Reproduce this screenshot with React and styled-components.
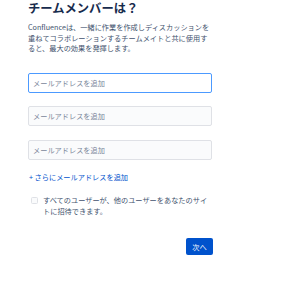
import styled, { createGlobalStyle } from "styled-components";

const GlobalStyle = createGlobalStyle`
  body {
    margin: 0;
    background: #ffffff;
    font-family: "Noto Sans CJK JP", "Noto Sans", sans-serif;
  }
`;

const Wrapper = styled.main`
  width: 184px;
  margin-left: 28px;
  display: flex;
  flex-direction: column;
`;

const Title = styled.h1`
  margin: 0;
  font-size: 12.3px;
  line-height: 16px;
  font-weight: 700;
  color: #172b4d;
`;

const Lead = styled.p`
  margin: 6px 0 0;
  font-size: 7.2px;
  line-height: 10.5px;
  color: #42526e;
`;

const Fields = styled.div`
  margin-top: 19px;
  display: flex;
  flex-direction: column;
  gap: 13.5px;
`;

const Input = styled.input`
  box-sizing: border-box;
  width: 100%;
  height: 20px;
  padding: 0 4px;
  font-family: inherit;
  font-size: 7.2px;
  color: #172b4d;
  border-radius: 2px;
  outline: none;
  border: 1px solid ${(p) => (p.$focused ? "#4c9aff" : "#dfe1e6")};
  background: ${(p) => (p.$focused ? "#ffffff" : "#fafbfc")};

  &::placeholder {
    color: #7a869a;
  }
`;

const AddLink = styled.a`
  margin-top: 12.5px;
  margin-left: 1px;
  font-size: 7.2px;
  line-height: 10.5px;
  color: #0052cc;
  text-decoration: none;
`;

const CheckRow = styled.label`
  margin-top: 12.5px;
  display: flex;
  align-items: flex-start;
  gap: 5px;
  font-size: 7.2px;
  line-height: 11px;
  color: #42526e;
`;

const Box = styled.span`
  flex: none;
  box-sizing: border-box;
  width: 7px;
  height: 7px;
  margin: 2px 0 0 3px;
  border: 1px solid #dfe1e6;
  border-radius: 1.5px;
  background: #fafbfc;
`;

const Footer = styled.div`
  margin-top: 21px;
  display: flex;
  justify-content: flex-end;
`;

const Button = styled.button`
  width: 27px;
  height: 17px;
  margin-right: -1px;
  padding: 0;
  border: none;
  border-radius: 2px;
  background: #0052cc;
  color: #ffffff;
  font-family: inherit;
  font-size: 7.2px;
`;

export default function App() {
  return (
    <>
      <GlobalStyle />
      <Wrapper>
        <Title>チームメンバーは？</Title>
        <Lead>
          Confluenceは、一緒に作業を作成しディスカッションを重ねてコラボレーションするチームメイトと共に使用すると、最大の効果を発揮します。
        </Lead>
        <Fields>
          <Input $focused placeholder="メールアドレスを追加" />
          <Input placeholder="メールアドレスを追加" />
          <Input placeholder="メールアドレスを追加" />
        </Fields>
        <AddLink href="#">+ さらにメールアドレスを追加</AddLink>
        <CheckRow>
          <Box />
          <span>すべてのユーザーが、他のユーザーをあなたのサイトに招待できます。</span>
        </CheckRow>
        <Footer>
          <Button>次へ</Button>
        </Footer>
      </Wrapper>
    </>
  );
}
